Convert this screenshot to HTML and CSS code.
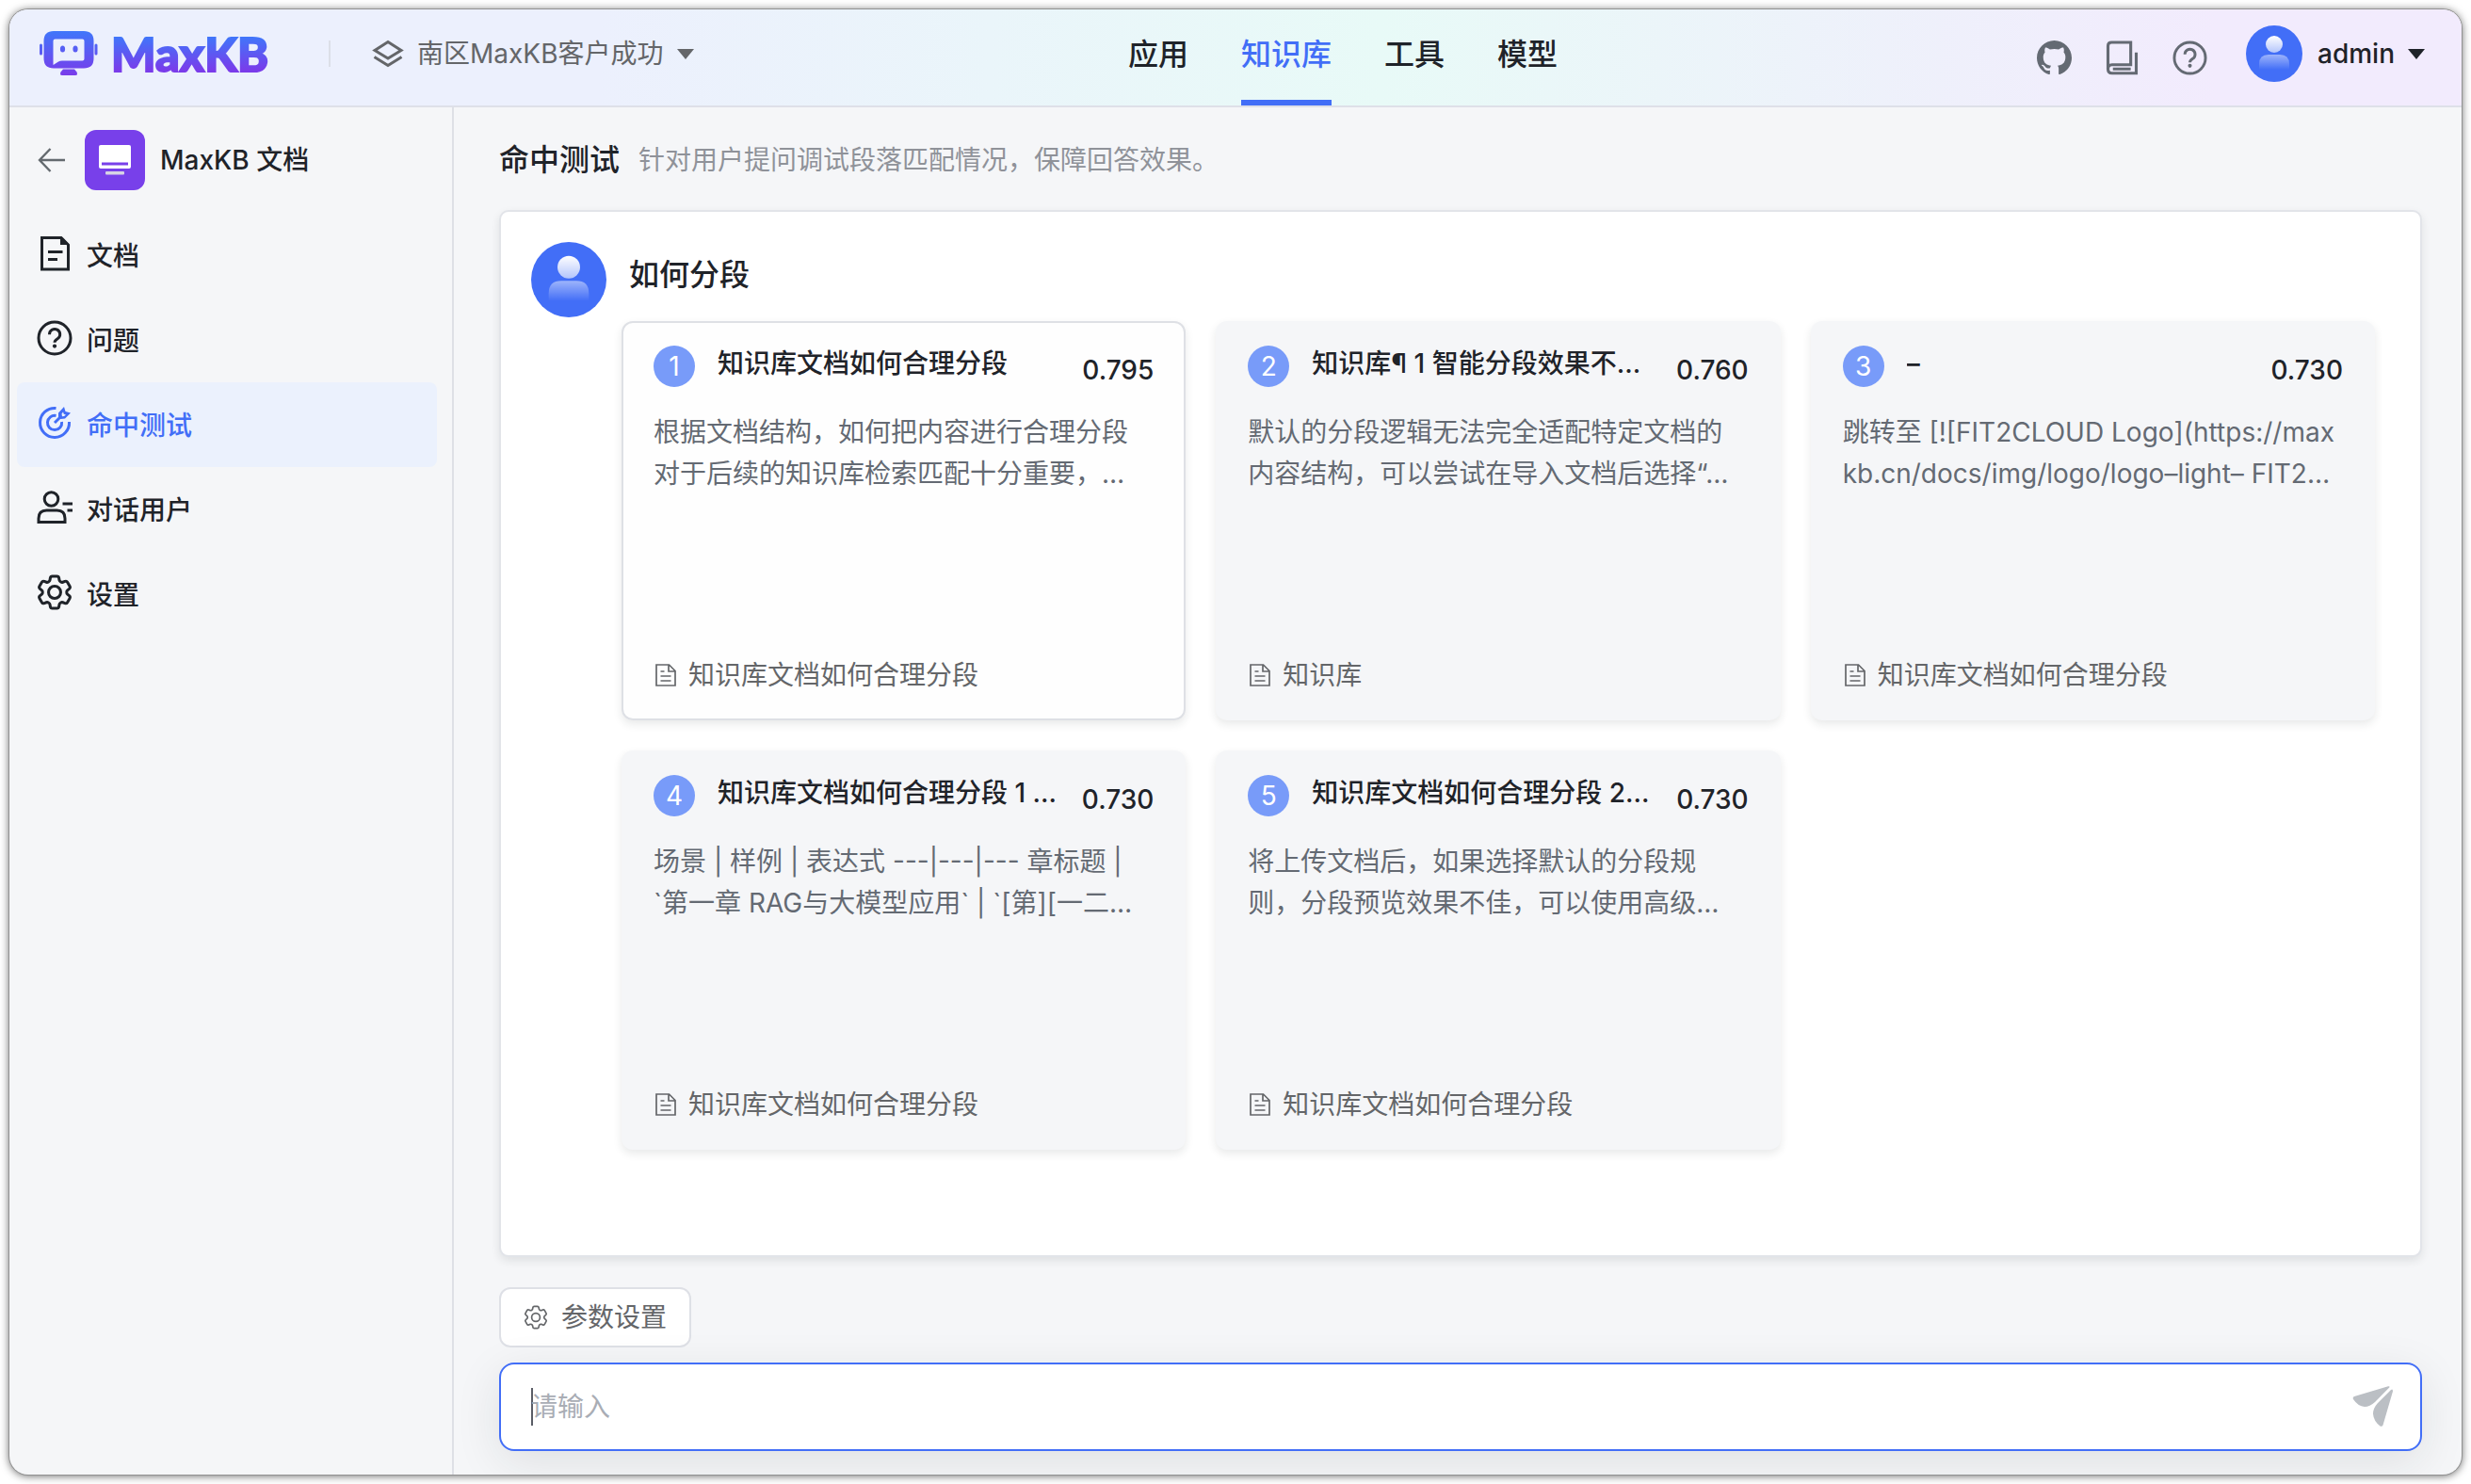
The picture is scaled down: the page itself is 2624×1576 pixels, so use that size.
FILE: index.html
```html
<!DOCTYPE html>
<html lang="zh-CN">
<head>
<meta charset="utf-8">
<meta name="viewport" content="width=device-width, initial-scale=1">
<title>命中测试 - MaxKB</title>
<link rel="stylesheet" href="styles.css">
</head>
<body>
<svg class="defs" width="0" height="0" aria-hidden="true">
  <defs>
    <linearGradient id="brand" x1="0" y1="0" x2="0" y2="48" gradientUnits="userSpaceOnUse"><stop offset="0" stop-color="#4076fa"/><stop offset="1" stop-color="#7a3bea"/></linearGradient>
    <linearGradient id="head" x1="0" y1="0" x2="0" y2="1"><stop offset="0" stop-color="#fff"/><stop offset="1" stop-color="#fff" stop-opacity=".6"/></linearGradient>
    <linearGradient id="torso" x1="0" y1="0" x2="0" y2="1"><stop offset="0" stop-color="#fff" stop-opacity=".48"/><stop offset="1" stop-color="#fff" stop-opacity="0"/></linearGradient>
  </defs>
  <symbol id="i-user" viewBox="0 0 60 60">
    <circle cx="30" cy="30" r="30" fill="#426ef7"/>
    <circle cx="30" cy="20" r="9" fill="url(#head)"/>
    <path d="M14 47V41q0-10 10-10h12q10 0 10 10v6z" fill="url(#torso)"/>
  </symbol>
  <symbol id="i-gear" viewBox="2 2 20 20">
    <g fill="none" stroke="currentColor"><path d="M9.594 3.94c.09-.542.56-.94 1.11-.94h2.593c.55 0 1.02.398 1.11.94l.213 1.281c.063.374.313.686.645.87.074.04.147.083.22.127.325.196.72.257 1.075.124l1.217-.456a1.125 1.125 0 0 1 1.37.49l1.296 2.247a1.125 1.125 0 0 1-.26 1.431l-1.003.827c-.293.241-.438.613-.43.992a7.723 7.723 0 0 1 0 .255c-.008.378.137.75.43.991l1.004.827c.424.35.534.955.26 1.43l-1.298 2.247a1.125 1.125 0 0 1-1.369.491l-1.217-.456c-.355-.133-.75-.072-1.076.124a6.47 6.47 0 0 1-.22.128c-.331.183-.581.495-.644.869l-.213 1.281c-.09.543-.56.94-1.11.94h-2.594c-.55 0-1.019-.398-1.11-.94l-.213-1.281c-.062-.374-.312-.686-.644-.87a6.52 6.52 0 0 1-.22-.127c-.325-.196-.72-.257-1.076-.124l-1.217.456a1.125 1.125 0 0 1-1.369-.49l-1.297-2.247a1.125 1.125 0 0 1 .26-1.431l1.004-.827c.292-.24.437-.613.43-.991a6.932 6.932 0 0 1 0-.255c.007-.38-.138-.751-.43-.992l-1.004-.827a1.125 1.125 0 0 1-.26-1.43l1.297-2.247a1.125 1.125 0 0 1 1.37-.491l1.216.456c.356.133.751.072 1.076-.124.072-.044.146-.086.22-.128.332-.183.582-.495.644-.869l.214-1.28Z"/><circle cx="12" cy="12" r="3.4"/></g>
  </symbol>
  <symbol id="i-help" viewBox="0 0 38 38">
    <g fill="none" stroke="currentColor" stroke-width="3"><circle cx="19" cy="19" r="17"/><path d="M13.5 15.2a5.6 5.6 0 1 1 8.6 4.6c-2 1.300-3.100 2.200-3.100 4"/></g>
    <circle cx="19" cy="27.600" r="2.100" fill="currentColor"/>
  </symbol>
  <symbol id="i-file" viewBox="0 0 24 26">
    <path d="M2 2h13.500l6.500 6.500V24H2zM15 2.500V9h6.500M6.500 9h4M6.500 14h11M6.500 19h11" fill="none" stroke="currentColor" stroke-width="1.700"/>
  </symbol>
</svg>

<div class="window">
  <header class="topbar">
    <div class="topbar-left">
      <a class="brand" href="#" aria-label="MaxKB">
        <svg class="brand-icon" viewBox="0 0 62 48">
          <g fill="url(#brand)">
            <path fill-rule="evenodd" d="M15 0h32q10.500 0 10.500 10.500v18.500q0 10.500-10.500 10.500H15Q4.500 39.500 4.500 29V10.500Q4.500 0 15 0zM16.500 8.500q-2 0-2 2v25.500l5.500-3.500q1.500-1 4-1h21.500q2 0 2-2v-19q0-2-2-2z"/>
            <rect x="0" y="13.500" width="3" height="12" rx="1.500"/><rect x="58.500" y="13.500" width="3" height="12" rx="1.500"/>
            <ellipse cx="24.500" cy="19" rx="2.600" ry="3.500"/><ellipse cx="38" cy="19" rx="2.600" ry="3.500"/>
            <path d="M25 40.500h12l2.500 3q1.500 3.500-1.500 3.500H24q-3 0-1.500-3.500z"/>
          </g>
        </svg>
        <span class="brand-name">MaxKB</span>
      </a>
      <span class="divider"></span>
      <button class="workspace" type="button">
        <svg class="layers" viewBox="0 0 34 30" fill="none" stroke="currentColor" stroke-width="3"><path d="M17 2.500 31 11.500 17 20 3 11.500zM2.500 18.500 17 27.500l14.500-9"/></svg>
        <span>南区MaxKB客户成功</span>
        <svg class="caret" viewBox="0 0 18 11"><path d="M0 0h18L9 11z" fill="currentColor"/></svg>
      </button>
    </div>
    <nav class="tabs">
      <a class="tab" href="#">应用</a>
      <a class="tab is-active" href="#" aria-current="page">知识库</a>
      <a class="tab" href="#">工具</a>
      <a class="tab" href="#">模型</a>
    </nav>
    <div class="topbar-right">
      <a class="tool" href="#" aria-label="GitHub"><svg viewBox="0 0 16 16"><path fill="currentColor" d="M8 0C3.580 0 0 3.580 0 8c0 3.540 2.290 6.530 5.470 7.590.4.070.55-.17.55-.38 0-.19-.01-.82-.01-1.490-2.010.37-2.530-.49-2.690-.94-.09-.23-.48-.94-.82-1.130-.28-.15-.68-.52-.01-.53.63-.01 1.080.58 1.230.82.72 1.210 1.870.87 2.330.66.07-.52.28-.87.51-1.070-1.780-.2-3.640-.89-3.640-3.950 0-.87.31-1.590.82-2.150-.08-.2-.36-1.020.08-2.120 0 0 .67-.21 2.200.82.64-.18 1.320-.27 2-.27s1.360.09 2 .27c1.530-1.040 2.200-.82 2.200-.82.44 1.100.16 1.920.08 2.120.51.56.82 1.270.82 2.150 0 3.070-1.870 3.750-3.650 3.950.29.25.54.73.54 1.480 0 1.070-.01 1.930-.01 2.200 0 .21.15.46.55.38A8.010 8.010 0 0 0 16 8c0-4.420-3.580-8-8-8z"/></svg></a>
      <a class="tool" href="#" aria-label="文档中心"><svg viewBox="0 0 36 38" fill="none" stroke="currentColor" stroke-width="3.200"><path d="M2.600 31.500V6q0-4 4-4h20.800v24.500H7q-4.400 0-4.400 4.600t4.400 4.600h26.400V13M27.400 31H8"/></svg></a>
      <a class="tool" href="#" aria-label="帮助"><svg viewBox="0 0 38 38"><use href="#i-help"/></svg></a>
      <button class="account" type="button">
        <svg class="account-avatar"><use href="#i-user"/></svg>
        <span>admin</span>
        <svg class="caret" viewBox="0 0 18 11"><path d="M0 0h18L9 11z" fill="currentColor"/></svg>
      </button>
    </div>
  </header>

  <div class="layout">
    <aside class="sidebar">
      <div class="kb">
        <a class="back" href="#" aria-label="返回"><svg viewBox="0 0 30 26" fill="none" stroke="currentColor" stroke-width="2.400"><path d="M29 13H2M13.500 1 2 13l11.500 12"/></svg></a>
        <span class="kb-icon"><svg viewBox="0 0 34 32"><rect width="34" height="25" rx="2" fill="#fff"/><rect x="3" y="18.500" width="28" height="3" fill="#7840ea"/><rect x="7" y="28" width="20" height="3.500" rx="1" fill="#d7d3e4"/></svg></span>
        <span class="kb-name">MaxKB 文档</span>
      </div>
      <nav class="menu">
        <a class="menu-item" href="#"><svg viewBox="0 0 38 38"><path d="M5.500 2.500H26l7.500 7.500v26h-28z" fill="none" stroke="currentColor" stroke-width="3"/><path d="M25 2h2l7 7v1h-9zM12 16h15.500v3H12zM12 24h10v3H12z" fill="currentColor"/></svg><span>文档</span></a>
        <a class="menu-item" href="#"><svg viewBox="0 0 38 38"><use href="#i-help"/></svg><span>问题</span></a>
        <a class="menu-item is-active" href="#" aria-current="page"><svg viewBox="0 0 38 38"><g fill="none" stroke="currentColor" stroke-width="3"><path d="M20.500 3.500A15.500 15.500 0 1 0 34.500 18M20.500 11.500a7.600 7.600 0 1 0 6.100 6.500M19 19l7-7"/></g><path d="M23 8.500 29 2l1.500 5L36 8.500l-6 6-4.500.5-2.500-2z" fill="currentColor"/><path d="M26.500 9.500l1.500-2 .8 2.200 2.200.9-2 1.500-2 .2z" fill="#ebf1fd"/></svg><span>命中测试</span></a>
        <a class="menu-item" href="#"><svg viewBox="0 0 38 38"><g fill="none" stroke="currentColor" stroke-width="3"><circle cx="15.500" cy="10" r="7.300"/><path d="M2 34.500v-4q0-8.500 8.500-8.500h11q8.500 0 8.500 8.500v4zM27.500 15H38M32.500 22H38"/></g></svg><span>对话用户</span></a>
        <a class="menu-item" href="#"><svg class="gear-bold"><use href="#i-gear"/></svg><span>设置</span></a>
      </nav>
    </aside>

    <main class="main">
      <div class="page-head">
        <h1>命中测试</h1>
        <p>针对用户提问调试段落匹配情况，保障回答效果。</p>
      </div>

      <section class="panel">
        <div class="question">
          <svg class="question-avatar"><use href="#i-user"/></svg>
          <h2>如何分段</h2>
        </div>
        <div class="cards">
          <article class="card is-hover">
            <header class="card-head"><span class="rank">1</span><h3>知识库文档如何合理分段</h3><span class="score">0.795</span></header>
            <p class="card-text">根据文档结构，如何把内容进行合理分段<br>对于后续的知识库检索匹配十分重要，…</p>
            <footer class="card-foot"><svg><use href="#i-file"/></svg><span>知识库文档如何合理分段</span></footer>
          </article>
          <article class="card">
            <header class="card-head"><span class="rank">2</span><h3>知识库¶ 1 智能分段效果不…</h3><span class="score">0.760</span></header>
            <p class="card-text">默认的分段逻辑无法完全适配特定文档的<br>内容结构，可以尝试在导入文档后选择“…</p>
            <footer class="card-foot"><svg><use href="#i-file"/></svg><span>知识库</span></footer>
          </article>
          <article class="card">
            <header class="card-head"><span class="rank">3</span><h3>–</h3><span class="score">0.730</span></header>
            <p class="card-text">跳转至 [![FIT2CLOUD Logo](https://max<br>kb.cn/docs/img/logo/logo–light– FIT2…</p>
            <footer class="card-foot"><svg><use href="#i-file"/></svg><span>知识库文档如何合理分段</span></footer>
          </article>
          <article class="card">
            <header class="card-head"><span class="rank">4</span><h3>知识库文档如何合理分段 1 …</h3><span class="score">0.730</span></header>
            <p class="card-text">场景 | 样例 | 表达式 ---|---|--- 章标题 |<br>`第一章 RAG与大模型应用` | `[第][一二…</p>
            <footer class="card-foot"><svg><use href="#i-file"/></svg><span>知识库文档如何合理分段</span></footer>
          </article>
          <article class="card">
            <header class="card-head"><span class="rank">5</span><h3>知识库文档如何合理分段 2…</h3><span class="score">0.730</span></header>
            <p class="card-text">将上传文档后，如果选择默认的分段规<br>则，分段预览效果不佳，可以使用高级…</p>
            <footer class="card-foot"><svg><use href="#i-file"/></svg><span>知识库文档如何合理分段</span></footer>
          </article>
        </div>
      </section>

      <button class="params" type="button"><svg class="gear-thin"><use href="#i-gear"/></svg><span>参数设置</span></button>

      <form class="ask">
        <span class="cursor"></span>
        <input type="text" placeholder="请输入" aria-label="请输入">
        <button class="send" type="button" aria-label="发送"><svg viewBox="0 0 44 44" fill="#bbbfc4"><path d="M2 11 38 .200q2.500-.4 1 1.600L24 17q-5.500 5-11 5Q6 21.500 1 14q-1-2.200 1-3zM43 5.500 32.500 41.500q-1 2-3 1-7-5.500-7.500-13 0-6 5-11.500L41 4q2-1.500 2 1.500z"/></svg></button>
      </form>
    </main>
  </div>
</div>
</body>
</html>
```
FILE: styles.css
```css
* { box-sizing: border-box; }

body {
  margin: 0;
  padding: 10px;
  min-height: 100vh;
  display: flex;
  background: #fff;
  color: #1f2329;
  font-family: Inter, "Noto Sans CJK SC", sans-serif;
  font-size: 28px;
  line-height: 44px;
}

h1, h2, h3, p { margin: 0; font-weight: 500; }
a { color: inherit; text-decoration: none; }
svg { display: block; flex: none; }
button {
  font: inherit;
  color: inherit;
  border: 0;
  padding: 0;
  background: none;
  cursor: pointer;
}
.defs { position: absolute; }

.window {
  flex: 1;
  min-width: 0;
  display: flex;
  flex-direction: column;
  overflow: hidden;
  border-radius: 20px;
  background: #f5f6f8;
  box-shadow: 0 0 0 1px #929292, 0 1px 10px rgba(0, 0, 0, .65);
}

/* Top bar */
.topbar {
  display: grid;
  grid-template-columns: 99fr auto 80fr;
  height: 104px;
  padding-bottom: 8px;
  border-bottom: 2px solid #dee0e8;
  background: linear-gradient(90deg, #ecf0fd 24%, #e8faf7 56%, #f2ebfd 90%);
}
.topbar-left, .topbar-right { display: flex; align-items: center; }
.topbar-left { padding-left: 32px; }
.brand { display: flex; align-items: center; gap: 14px; }
.brand-icon { width: 62px; height: 48px; }
.brand-name {
  font-family: Lato, sans-serif;
  font-weight: 900;
  font-size: 50px;
  line-height: 60px;
  color: transparent;
  -webkit-text-stroke: 2px transparent;
  background: linear-gradient(#4076fa 20%, #7a3bea 80%);
  -webkit-background-clip: text;
  background-clip: text;
}
.divider { width: 2px; height: 28px; margin: 0 44px 0 64px; background: #dcdfe8; }
.workspace { display: flex; align-items: center; color: #646669; }
.layers { width: 34px; height: 30px; margin-right: 14px; }
.caret { width: 18px; height: 11px; margin-left: 14px; }

.tabs { display: flex; gap: 56px; margin-bottom: -8px; }
.tab { font-size: 32px; line-height: 96px; font-weight: 500; }
.tab.is-active { color: #426ef7; border-bottom: 6px solid #426ef7; }

.topbar-right { justify-content: flex-end; padding-right: 39px; color: #1f2329; }
.tool { margin: 8px 35px 0 0; color: #646a73; }
.tool svg { width: 37px; height: 37px; }
.account { display: flex; align-items: center; margin-left: 6px; font-weight: 500; }
.account-avatar { width: 60px; height: 60px; margin-right: 16px; }

/* Body */
.layout { flex: 1; display: flex; }
.sidebar { flex: none; width: 472px; padding: 24px 16px 24px 8px; border-right: 2px solid #dee0e6; }
.kb { display: flex; align-items: center; height: 64px; margin-bottom: 24px; padding-left: 22px; font-weight: 500; }
.back { color: #646a6f; margin-right: 20px; }
.back svg { width: 30px; height: 26px; }
.kb-icon {
  display: grid;
  place-items: center;
  width: 64px;
  height: 64px;
  margin-right: 16px;
  border-radius: 12px;
  background: #7840ea;
}
.kb-icon svg { width: 34px; height: 32px; }
.menu-item {
  display: flex;
  align-items: center;
  gap: 15px;
  height: 90px;
  padding: 2px 21px 0;
  border-radius: 8px;
  font-weight: 500;
}
.menu-item svg { width: 38px; height: 38px; margin-bottom: 6px; }
.menu-item.is-active { color: #426ef7; background: #ebf1fd; }
.gear-bold { stroke-width: 1.6px; }
.gear-thin { width: 26px; height: 26px; stroke-width: 1.3px; }

.main {
  flex: 1;
  min-width: 0;
  display: flex;
  flex-direction: column;
  align-items: stretch;
  padding: 34px 42px 25px 48px;
}
.page-head { display: flex; align-items: center; gap: 20px; height: 44px; margin-bottom: 31px; }
.page-head h1 { font-size: 32px; }
.page-head p { color: #8f9299; font-weight: 400; }

.panel {
  flex: 1;
  padding: 32px;
  border: 2px solid #e2e4e9;
  border-radius: 10px;
  background: #fff;
  box-shadow: 0 4px 10px rgba(31, 35, 41, .1);
}
.question { display: flex; gap: 24px; height: 84px; }
.question-avatar { width: 80px; height: 80px; }
.question h2 { font-size: 32px; line-height: 70px; }
.cards { display: grid; grid-template-columns: repeat(3, minmax(0, 1fr)); gap: 32px; padding: 0 16px 0 96px; }
.card {
  display: flex;
  flex-direction: column;
  height: 424px;
  padding: 24px 32px;
  border: 2px solid transparent;
  border-radius: 12px;
  background: #f5f6f8 border-box;
  box-shadow: 0 4px 10px rgba(31, 35, 41, .1);
}
.card.is-hover { border-color: #dee0e5; background: #fefefe; }
.card-head { display: flex; height: 44px; line-height: 38px; }
.rank {
  flex: none;
  width: 44px;
  height: 44px;
  margin-right: 24px;
  border-radius: 50%;
  background: #789bf9;
  color: #fff;
  line-height: 44px;
  text-align: center;
}
.card-head h3 {
  flex: 1;
  min-width: 0;
  font-size: 28px;
  white-space: nowrap;
  overflow: hidden;
  text-overflow: ellipsis;
}
.score { align-self: flex-end; line-height: 36px; font-weight: 500; }
.card-text {
  margin-top: 26px;
  color: #646a73;
  font-weight: 400;
  word-break: break-all;
}
.card-foot { display: flex; align-items: center; gap: 12px; margin-top: auto; padding-left: 1px; color: #646669; }
.card-foot svg { width: 24px; height: 26px; }

.params {
  align-self: flex-start;
  display: flex;
  align-items: center;
  gap: 14px;
  height: 64px;
  margin: 32px 0 16px;
  padding: 0 24px;
  border: 2px solid #dee0e6;
  border-radius: 12px;
  background: #fff;
  color: #646669;
}
.ask {
  display: flex;
  align-items: center;
  height: 94px;
  padding: 0 28px 0 32px;
  border: 2px solid #426ef7;
  border-radius: 16px;
  background: #fff;
  box-shadow: 0 12px 48px rgba(31, 35, 41, .1);
}
.cursor { flex: none; width: 2px; height: 40px; margin-right: -2px; background: #5a5d66; }
.ask input {
  flex: 1;
  min-width: 0;
  padding: 0;
  border: 0;
  outline: 0;
  background: none;
  font: inherit;
  color: #1f2329;
}
.ask input::placeholder { color: #a9adb5; opacity: 1; }
.send svg { width: 44px; height: 44px; }
```
